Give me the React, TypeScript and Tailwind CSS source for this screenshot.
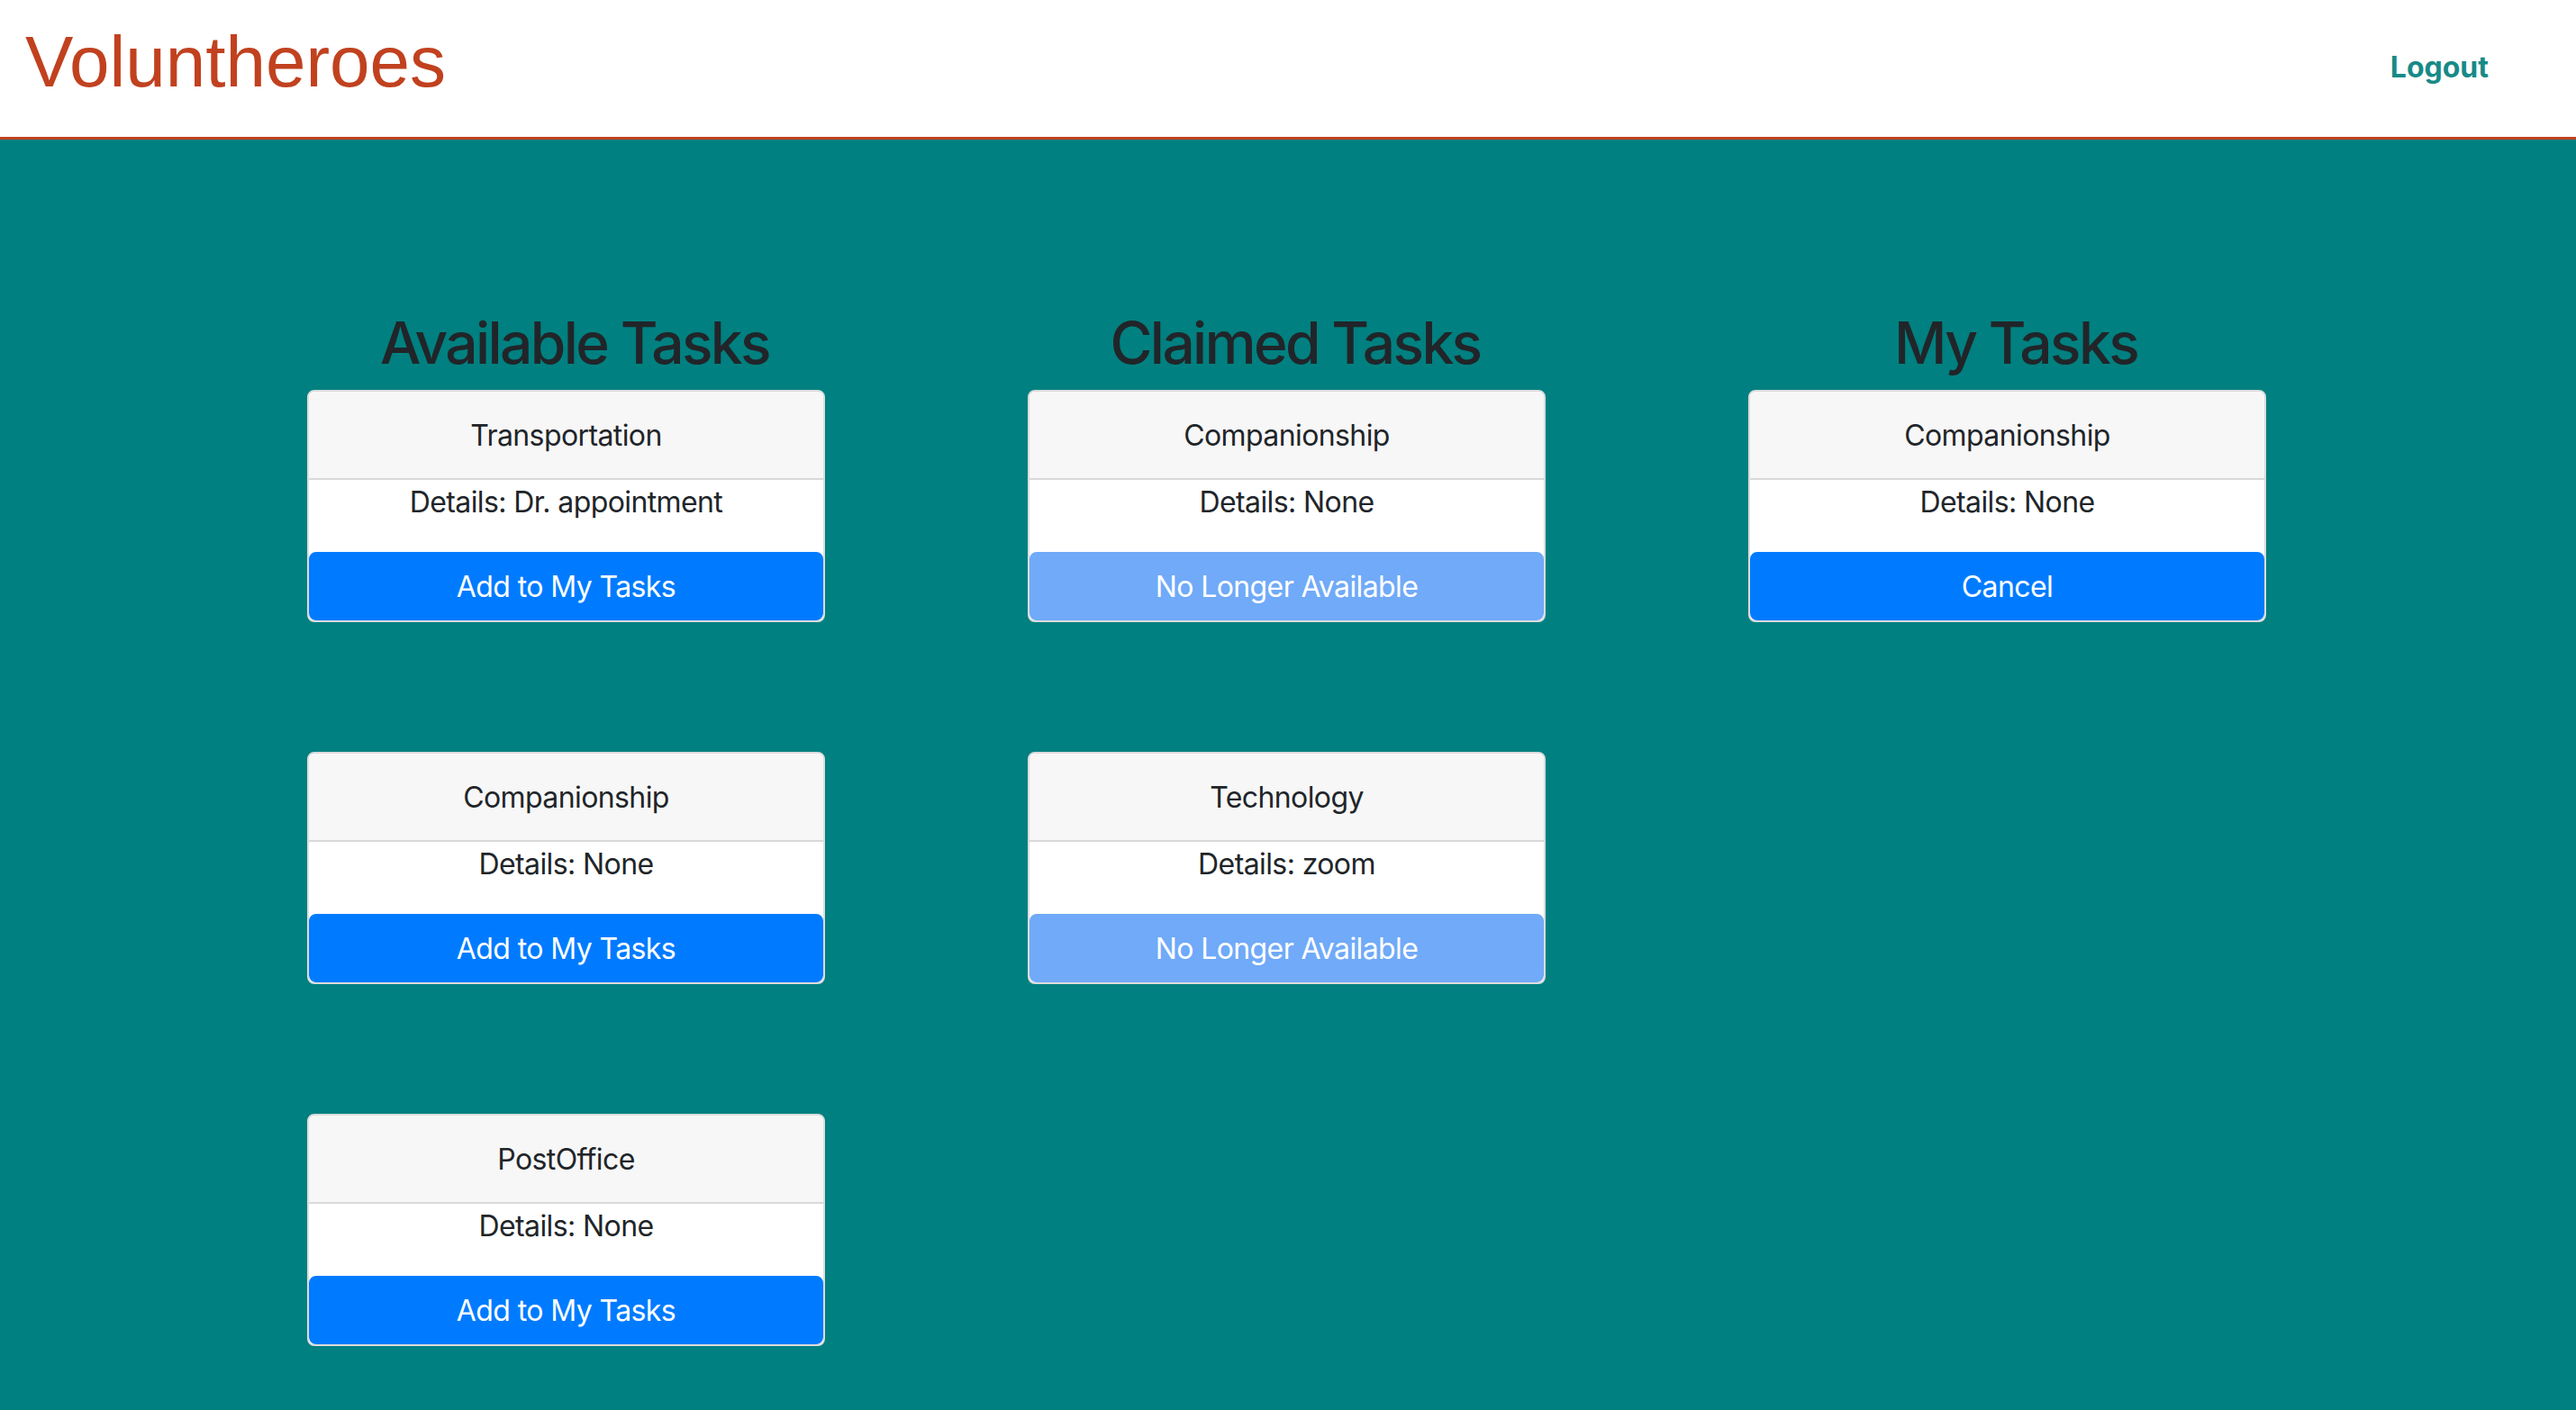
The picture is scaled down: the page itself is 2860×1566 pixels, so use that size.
import React from "react";

type Task = {
  title: string;
  details: string;
  action: string;
  disabled?: boolean;
};

const columns: { heading: string; tasks: Task[] }[] = [
  {
    heading: "Available Tasks",
    tasks: [
      { title: "Transportation", details: "Dr. appointment", action: "Add to My Tasks" },
      { title: "Companionship", details: "None", action: "Add to My Tasks" },
      { title: "PostOffice", details: "None", action: "Add to My Tasks" },
    ],
  },
  {
    heading: "Claimed Tasks",
    tasks: [
      { title: "Companionship", details: "None", action: "No Longer Available", disabled: true },
      { title: "Technology", details: "zoom", action: "No Longer Available", disabled: true },
    ],
  },
  {
    heading: "My Tasks",
    tasks: [{ title: "Companionship", details: "None", action: "Cancel" }],
  },
];

const TaskCard = ({ task }: { task: Task }) => {
  return (
    <div className="w-[575px] rounded-[8px] border-2 border-[#dcdcdc] bg-white overflow-hidden tracking-[-0.6px]">
      <div className="bg-[#f7f7f7] border-b-2 border-[#d9d9d9] px-[40px] pt-[25px] pb-[23px] text-center text-[32px] leading-[48px] text-[#212529]">
        {task.title}
      </div>
      <p className="pt-[1px] mb-[31px] text-center text-[32px] leading-[48px] text-[#212529]">
        Details: {task.details}
      </p>
      <button
        className={
          task.disabled
            ? "block w-full rounded-[8px] border-2 border-[#70aaf8] bg-[#70aaf8] px-[24px] pt-[13px] pb-[11px] text-[32px] leading-[48px] text-white"
            : "block w-full rounded-[8px] border-2 border-[#007bff] bg-[#007bff] px-[24px] pt-[13px] pb-[11px] text-[32px] leading-[48px] text-white"
        }
      >
        {task.action}
      </button>
    </div>
  );
};

export default function App() {
  return (
    <div className="min-h-screen bg-[#008080] font-['Inter','Noto_Sans',sans-serif]">
      <header className="flex h-[155px] items-start justify-between border-b-[3px] border-[#c1411f] bg-white pl-[28px] pr-[97px]">
        <h1 className="mt-[21px] font-['Liberation_Sans',Arial,sans-serif] text-[80px] leading-[96px] text-[#c1411f]">
          Voluntheroes
        </h1>
        <a className="mt-[51px] text-[32px] font-bold leading-[48px] text-[#178a87]">Logout</a>
      </header>

      <main className="flex justify-center gap-[222px] pt-[187px] pb-[72px]">
        {columns.map((col) => (
          <div key={col.heading} className="flex w-[578px] flex-col">
            <h2 className="mb-[14px] pl-[16px] text-center text-[64px] font-medium leading-[77px] tracking-[-2.6px] text-[#212529]">
              {col.heading}
            </h2>
            <div className="flex flex-col gap-[144px]">
              {col.tasks.map((t, i) => (
                <TaskCard key={i} task={t} />
              ))}
            </div>
          </div>
        ))}
      </main>
    </div>
  );
}
